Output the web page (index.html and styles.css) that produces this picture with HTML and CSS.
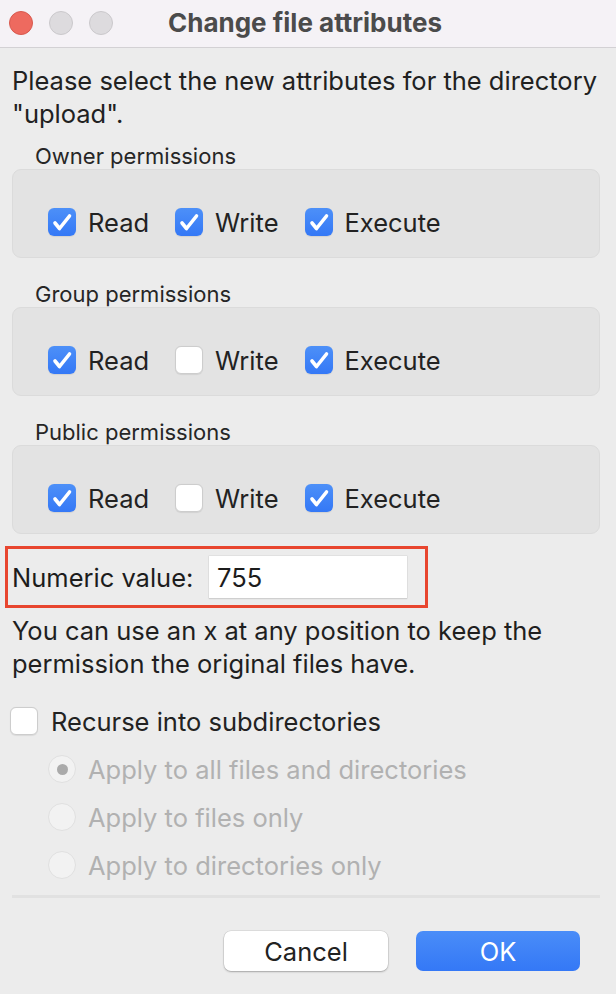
FILE: index.html
```html
<!DOCTYPE html>
<html lang="en">
<head>
<meta charset="utf-8">
<title>Change file attributes</title>
<link rel="stylesheet" href="styles.css">
</head>
<body>
<div class="window">
  <header class="titlebar">
    <div class="lights">
      <span class="light red"></span>
      <span class="light gray"></span>
      <span class="light gray"></span>
    </div>
    <div class="title">Change file attributes</div>
    <div></div>
  </header>

  <main class="content">
    <p class="intro">Please select the new attributes for the directory "upload".</p>

    <section class="group">
      <div class="group-label">Owner permissions</div>
      <div class="group-box">
        <label class="item"><span class="cb on"><svg viewBox="0 0 28 28"><path d="M7 15 L11.5 20.5 L21.5 8"/></svg></span>Read</label>
        <label class="item"><span class="cb on"><svg viewBox="0 0 28 28"><path d="M7 15 L11.5 20.5 L21.5 8"/></svg></span>Write</label>
        <label class="item"><span class="cb on"><svg viewBox="0 0 28 28"><path d="M7 15 L11.5 20.5 L21.5 8"/></svg></span>Execute</label>
      </div>
    </section>

    <section class="group">
      <div class="group-label">Group permissions</div>
      <div class="group-box">
        <label class="item"><span class="cb on"><svg viewBox="0 0 28 28"><path d="M7 15 L11.5 20.5 L21.5 8"/></svg></span>Read</label>
        <label class="item"><span class="cb"></span>Write</label>
        <label class="item"><span class="cb on"><svg viewBox="0 0 28 28"><path d="M7 15 L11.5 20.5 L21.5 8"/></svg></span>Execute</label>
      </div>
    </section>

    <section class="group">
      <div class="group-label">Public permissions</div>
      <div class="group-box">
        <label class="item"><span class="cb on"><svg viewBox="0 0 28 28"><path d="M7 15 L11.5 20.5 L21.5 8"/></svg></span>Read</label>
        <label class="item"><span class="cb"></span>Write</label>
        <label class="item"><span class="cb on"><svg viewBox="0 0 28 28"><path d="M7 15 L11.5 20.5 L21.5 8"/></svg></span>Execute</label>
      </div>
    </section>

    <div class="numeric">
      <span class="numeric-label">Numeric value:</span>
      <div class="field">755</div>
    </div>

    <p class="hint">You can use an x at any position to keep the permission the original files have.</p>

    <label class="item recurse"><span class="cb"></span>Recurse into subdirectories</label>

    <div class="radios">
      <div class="radio-row"><span class="radio sel"></span>Apply to all files and directories</div>
      <div class="radio-row"><span class="radio"></span>Apply to files only</div>
      <div class="radio-row"><span class="radio"></span>Apply to directories only</div>
    </div>

    <div class="sep"></div>

    <div class="buttons">
      <button class="btn cancel">Cancel</button>
      <button class="btn ok">OK</button>
    </div>
  </main>
</div>
</body>
</html>
```

FILE: styles.css
```css
* { box-sizing: border-box; }

html, body {
  margin: 0;
  padding: 0;
  background: #ececec;
}

body {
  font-family: Inter, "Noto Sans", "Liberation Sans", sans-serif;
  color: #212121;
  width: 616px;
  height: 994px;
  overflow: hidden;
}

.titlebar {
  height: 48px;
  background: #f5f2f6;
  border-bottom: 1px solid #d3d1d4;
  display: grid;
  grid-template-columns: 1fr auto 1fr;
  align-items: center;
}

.lights {
  display: flex;
  gap: 16px;
  padding-left: 9px;
  padding-bottom: 1px;
}

.light {
  width: 24px;
  height: 24px;
  border-radius: 50%;
}

.light.red {
  background: #ee6a5f;
  border: 1px solid #d8594e;
}

.light.gray {
  background: #dddbde;
  border: 1px solid #cbc9cc;
}

.title {
  font-size: 26px;
  font-weight: 700;
  color: #4b4b4b;
  padding-right: 6px;
  padding-bottom: 2px;
}

.content {
  padding: 0 16px 0 12px;
}

.intro {
  margin: 16px 0 0;
  font-size: 25.5px;
  line-height: 33px;
}

.group { margin-top: 13px; }
.group + .group { margin-top: 23px; }

.group-label {
  font-size: 22px;
  line-height: 26px;
  padding-left: 23px;
  color: #262626;
}

.group-box {
  height: 89px;
  background: #e3e3e3;
  border: 1px solid #dbdbdb;
  border-radius: 9px;
  padding: 35px 0 0 35px;
  display: flex;
  gap: 26px;
}

.item {
  display: flex;
  align-items: center;
  gap: 12px;
  height: 34px;
  font-size: 25.5px;
  color: #222;
}

.cb {
  width: 28px;
  height: 28px;
  border-radius: 6px;
  background: #fff;
  border: 1px solid #cdcdcd;
  box-shadow: 0 0.5px 1px rgba(0,0,0,0.08);
  flex: none;
  display: block;
}

.cb.on {
  border: none;
  background: linear-gradient(#4d90f8, #3478f6);
}

.cb svg {
  display: block;
  width: 28px;
  height: 28px;
}

.cb svg path {
  fill: none;
  stroke: #fff;
  stroke-width: 3.6;
  stroke-linecap: round;
  stroke-linejoin: round;
}

.numeric {
  margin: 12px 0 0 -7px;
  width: 423px;
  height: 62px;
  border: 3px solid #e8462f;
  padding-left: 4px;
  display: flex;
  align-items: center;
}

.numeric-label {
  font-size: 25.5px;
  width: 197px;
  color: #1c1c1c;
}

.field {
  width: 198px;
  height: 42px;
  background: #fff;
  box-shadow: 0 0 0 0.5px #d6d6d6, 0 1px 1px rgba(0,0,0,0.15);
  font-size: 25.5px;
  line-height: 44px;
  padding-left: 8px;
  color: #1c1c1c;
}

.hint {
  margin: 6px 0 0;
  font-size: 25.5px;
  line-height: 33px;
  color: #1f1f1f;
}

.recurse {
  margin: 24px 0 0 -2px;
  gap: 13px;
}

.radios {
  margin-top: 14px;
  padding-left: 36px;
  display: flex;
  flex-direction: column;
  gap: 14px;
}

.radio-row {
  display: flex;
  align-items: center;
  gap: 12px;
  height: 34px;
  font-size: 25.5px;
  color: #b1b1b1;
}

.radio {
  width: 28px;
  height: 28px;
  border-radius: 50%;
  background: #f2f2f2;
  border: 1px solid #e0e0e0;
  display: flex;
  align-items: center;
  justify-content: center;
  flex: none;
}

.radio.sel::after {
  content: "";
  width: 11px;
  height: 11px;
  border-radius: 50%;
  background: #aaaaaa;
}

.sep {
  margin-top: 13px;
  height: 3px;
  background: #e1e1e1;
}

.buttons {
  margin-top: 33px;
  padding-right: 20px;
  display: flex;
  justify-content: flex-end;
  gap: 28px;
}

.btn {
  width: 164px;
  height: 40px;
  border-radius: 7px;
  font-family: inherit;
  font-size: 25.5px;
  border: none;
  padding: 0;
}

.btn.cancel {
  background: #fff;
  color: #222;
  box-shadow: 0 0 0 0.5px rgba(0,0,0,0.12), 0 1px 2px rgba(0,0,0,0.25);
}

.btn.ok {
  background: linear-gradient(#4a8df8, #3478f6);
  color: #fff;
}
```
